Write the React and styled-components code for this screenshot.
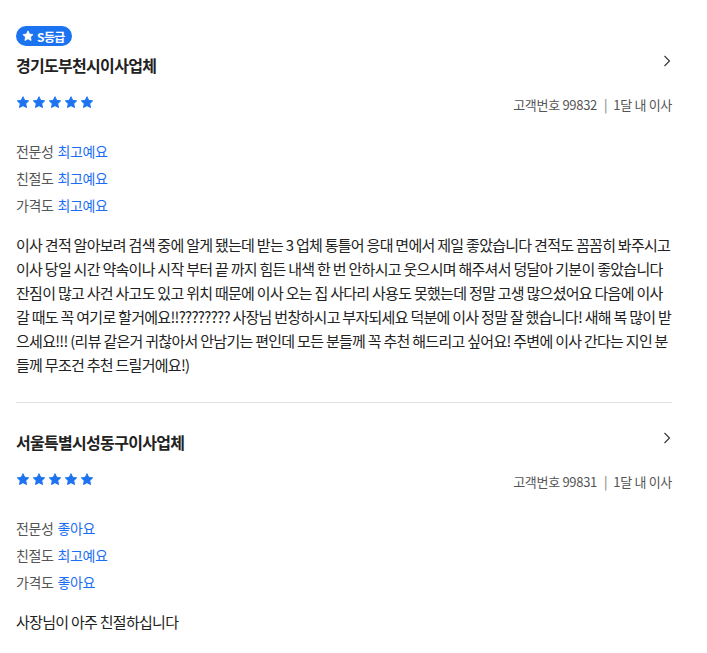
import React from "react";
import styled, { createGlobalStyle } from "styled-components";

const Global = createGlobalStyle`
  html, body { margin: 0; padding: 0; background: #fff; }
  body { font-family: "Noto Sans CJK KR", "Noto Sans", sans-serif; color: #222; }
`;

const Page = styled.div`
  width: 656px;
  padding: 26px 0 0 16px;
`;

const Card = styled.section`
  display: flex;
  flex-direction: column;
  padding-bottom: 25px;
`;

const Divider = styled.hr`
  border: 0;
  border-top: 1px solid #e1e1e1;
  margin: 0 0 28px;
`;

const Badge = styled.span`
  align-self: flex-start;
  display: inline-flex;
  align-items: center;
  gap: 3px;
  height: 20px;
  padding: 0 7px 0 6px;
  border-radius: 10px;
  background: #1b73f0;
  color: #fff;
  font-size: 12px;
  font-weight: 700;
  letter-spacing: -0.6px;
  margin-bottom: 8px;
`;

const HeaderRow = styled.div`
  display: flex;
  justify-content: space-between;
  align-items: flex-start;
`;

const Title = styled.h2`
  margin: 0;
  font-size: 16px;
  line-height: 22px;
  font-weight: 700;
  color: #222;
  letter-spacing: -0.7px;
`;

const Chevron = styled.svg`
  width: 10px;
  height: 12px;
  margin-top: 1px;
`;

const InfoRow = styled.div`
  display: flex;
  justify-content: space-between;
  align-items: flex-start;
  margin-top: 20px;
`;

const Stars = styled.div`
  display: flex;
  gap: 2px;
`;

const Meta = styled.div`
  font-size: 13px;
  line-height: 18px;
  color: #555;
  letter-spacing: -0.3px;
`;

const Sep = styled.span`
  margin: 0 6px 0 7px;
  color: #777;
`;

const Ratings = styled.dl`
  margin: 27px 0 0;
  display: flex;
  flex-direction: column;
  gap: 7px;
`;

const RatingRow = styled.div`
  display: flex;
  gap: 4px;
  font-size: 14px;
  line-height: 20px;
  letter-spacing: -0.4px;
`;

const Label = styled.dt`
  color: #555;
`;

const Value = styled.dd`
  margin: 0;
  color: #1b6ef3;
`;

const Body = styled.p`
  margin: 18px 0 0;
  font-size: 15px;
  line-height: 24px;
  color: #222;
  letter-spacing: -0.72px;
`;

const starPath =
  "M12 1.2l3.1 6.5 7 .9-5.2 4.9 1.3 7-6.2-3.4-6.2 3.4 1.3-7L1.9 8.6l7-.9z";

const Star = () => (
  <svg width="14" height="13" viewBox="0 0 24 23">
    <path d={starPath} fill="#1b73f0" stroke="#1b73f0" strokeWidth="1.6" strokeLinejoin="round" />
  </svg>
);

const BadgeStar = () => (
  <svg width="12" height="12" viewBox="0 0 24 23">
    <path d={starPath} fill="#fff" stroke="#fff" strokeWidth="1.6" strokeLinejoin="round" />
  </svg>
);

const reviews = [
  {
    badge: "S등급",
    name: "경기도부천시이사업체",
    id: "99832",
    when: "1달 내 이사",
    ratings: [
      ["전문성", "최고예요"],
      ["친절도", "최고예요"],
      ["가격도", "최고예요"],
    ],
    text:
      "이사 견적 알아보려 검색 중에 알게 됐는데 받는 3 업체 통틀어 응대 면에서 제일 좋았습니다 견적도 꼼꼼히 봐주시고 이사 당일 시간 약속이나 시작 부터 끝 까지 힘든 내색 한 번 안하시고 웃으시며 해주셔서 덩달아 기분이 좋았습니다 잔짐이 많고 사건 사고도 있고 위치 때문에 이사 오는 집 사다리 사용도 못했는데 정말 고생 많으셨어요 다음에 이사 갈 때도 꼭 여기로 할거에요!!???????? 사장님 번창하시고 부자되세요 덕분에 이사 정말 잘 했습니다! 새해 복 많이 받으세요!!! (리뷰 같은거 귀찮아서 안남기는 편인데 모든 분들께 꼭 추천 해드리고 싶어요! 주변에 이사 간다는 지인 분들께 무조건 추천 드릴거에요!)",
  },
  {
    name: "서울특별시성동구이사업체",
    id: "99831",
    when: "1달 내 이사",
    ratings: [
      ["전문성", "좋아요"],
      ["친절도", "최고예요"],
      ["가격도", "좋아요"],
    ],
    text: "사장님이 아주 친절하십니다",
  },
];

function Review({ r }) {
  return (
    <Card>
      {r.badge && (
        <Badge>
          <BadgeStar />
          {r.badge}
        </Badge>
      )}
      <HeaderRow>
        <Title>{r.name}</Title>
        <Chevron viewBox="0 0 10 12">
          <path d="M2.5 1l5 5-5 5" fill="none" stroke="#333" strokeWidth="1.1" />
        </Chevron>
      </HeaderRow>
      <InfoRow>
        <Stars>
          {[0, 1, 2, 3, 4].map((i) => (
            <Star key={i} />
          ))}
        </Stars>
        <Meta>
          고객번호 {r.id}
          <Sep>|</Sep>
          {r.when}
        </Meta>
      </InfoRow>
      <Ratings>
        {r.ratings.map(([k, v]) => (
          <RatingRow key={k}>
            <Label>{k}</Label>
            <Value>{v}</Value>
          </RatingRow>
        ))}
      </Ratings>
      <Body>{r.text}</Body>
    </Card>
  );
}

export default function App() {
  return (
    <>
      <Global />
      <Page>
        <Review r={reviews[0]} />
        <Divider />
        <Review r={reviews[1]} />
      </Page>
    </>
  );
}
